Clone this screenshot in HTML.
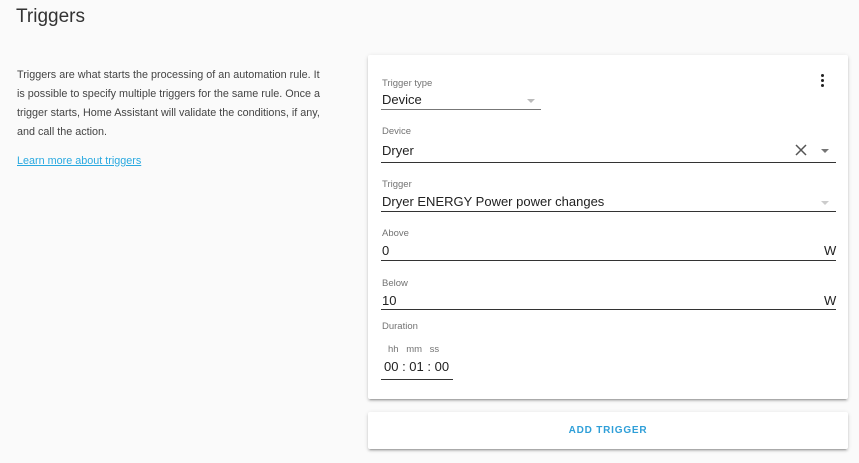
<!DOCTYPE html>
<html><head><style>
body{margin:0;width:859px;height:463px;background:#fafafa;font-family:"Liberation Sans",sans-serif;position:relative;overflow:hidden;color:#212121}
.a{position:absolute;white-space:nowrap}
.card{position:absolute;background:#fff;box-shadow:0 2px 2px rgba(0,0,0,.14),0 1px 5px rgba(0,0,0,.12),0 3px 1px -2px rgba(0,0,0,.2);border-radius:2px}
.lbl{font-size:9.5px;color:#737373}
.val{font-size:13px;color:#212121}
.line{position:absolute;height:1px;background:#333}
.arr{position:absolute;width:0;height:0;border-left:4px solid transparent;border-right:4px solid transparent;border-top:4px solid #757575}
</style></head><body>
<div class="a" style="left:16px;top:6px;font-size:19px;color:#333">Triggers</div>
<div class="a" style="left:17px;top:66px;font-size:10.8px;line-height:19px;color:#444">Triggers are what starts the processing of an automation rule. It<br>is possible to specify multiple triggers for the same rule. Once a<br>trigger starts, Home Assistant will validate the conditions, if any,<br>and call the action.</div>
<div class="a" style="left:17px;top:155px;font-size:10.8px;color:#29a9e0;text-decoration:underline">Learn more about triggers</div>

<div class="card" style="left:368px;top:55px;width:480px;height:344px">
 <div class="a lbl" style="left:14px;top:23px">Trigger type</div>
 <div class="a val" style="left:14px;top:37px">Device</div>
 <div class="arr" style="left:159px;top:44px;border-top-color:#bbb"></div>
 <div class="line" style="left:13px;top:54px;width:160px;background:#777"></div>
 <div class="a" style="left:453px;top:19px;width:3px">
  <div style="width:3px;height:3px;border-radius:50%;background:#222;margin-bottom:2px"></div>
  <div style="width:3px;height:3px;border-radius:50%;background:#222;margin-bottom:2px"></div>
  <div style="width:3px;height:3px;border-radius:50%;background:#222"></div>
 </div>

 <div class="a lbl" style="left:14px;top:71px">Device</div>
 <div class="a val" style="left:14px;top:88px">Dryer</div>
 <svg class="a" style="left:426px;top:88px" width="14" height="14"><path d="M2 2L12 12M12 2L2 12" stroke="#555" stroke-width="1.5"/></svg>
 <div class="arr" style="left:453px;top:94px"></div>
 <div class="line" style="left:13px;top:107px;width:455px"></div>

 <div class="a lbl" style="left:14px;top:124px">Trigger</div>
 <div class="a val" style="left:14px;top:139px">Dryer ENERGY Power power changes</div>
 <div class="arr" style="left:453px;top:146px;border-top-color:#ccc"></div>
 <div class="line" style="left:13px;top:156px;width:455px"></div>

 <div class="a lbl" style="left:14px;top:173px">Above</div>
 <div class="a val" style="left:14px;top:188px">0</div>
 <div class="a val" style="left:456px;top:188px">W</div>
 <div class="line" style="left:13px;top:205px;width:455px"></div>

 <div class="a lbl" style="left:14px;top:223px">Below</div>
 <div class="a val" style="left:14px;top:238px">10</div>
 <div class="a val" style="left:456px;top:238px">W</div>
 <div class="line" style="left:13px;top:254px;width:455px"></div>

 <div class="a lbl" style="left:14px;top:266px">Duration</div>
 <div class="a" style="left:20px;top:289px;font-size:9.5px;color:#737373;word-spacing:5px">hh mm ss</div>
 <div class="a val" style="left:16px;top:304px">00 : 01 : 00</div>
 <div class="line" style="left:13px;top:324px;width:72px"></div>
</div>

<div class="card" style="left:368px;top:412px;width:480px;height:37px">
 <div class="a" style="left:0;width:480px;text-align:center;top:13px;font-size:10px;font-weight:bold;letter-spacing:0.8px;color:#2f9fd8">ADD TRIGGER</div>
</div>
</body></html>
